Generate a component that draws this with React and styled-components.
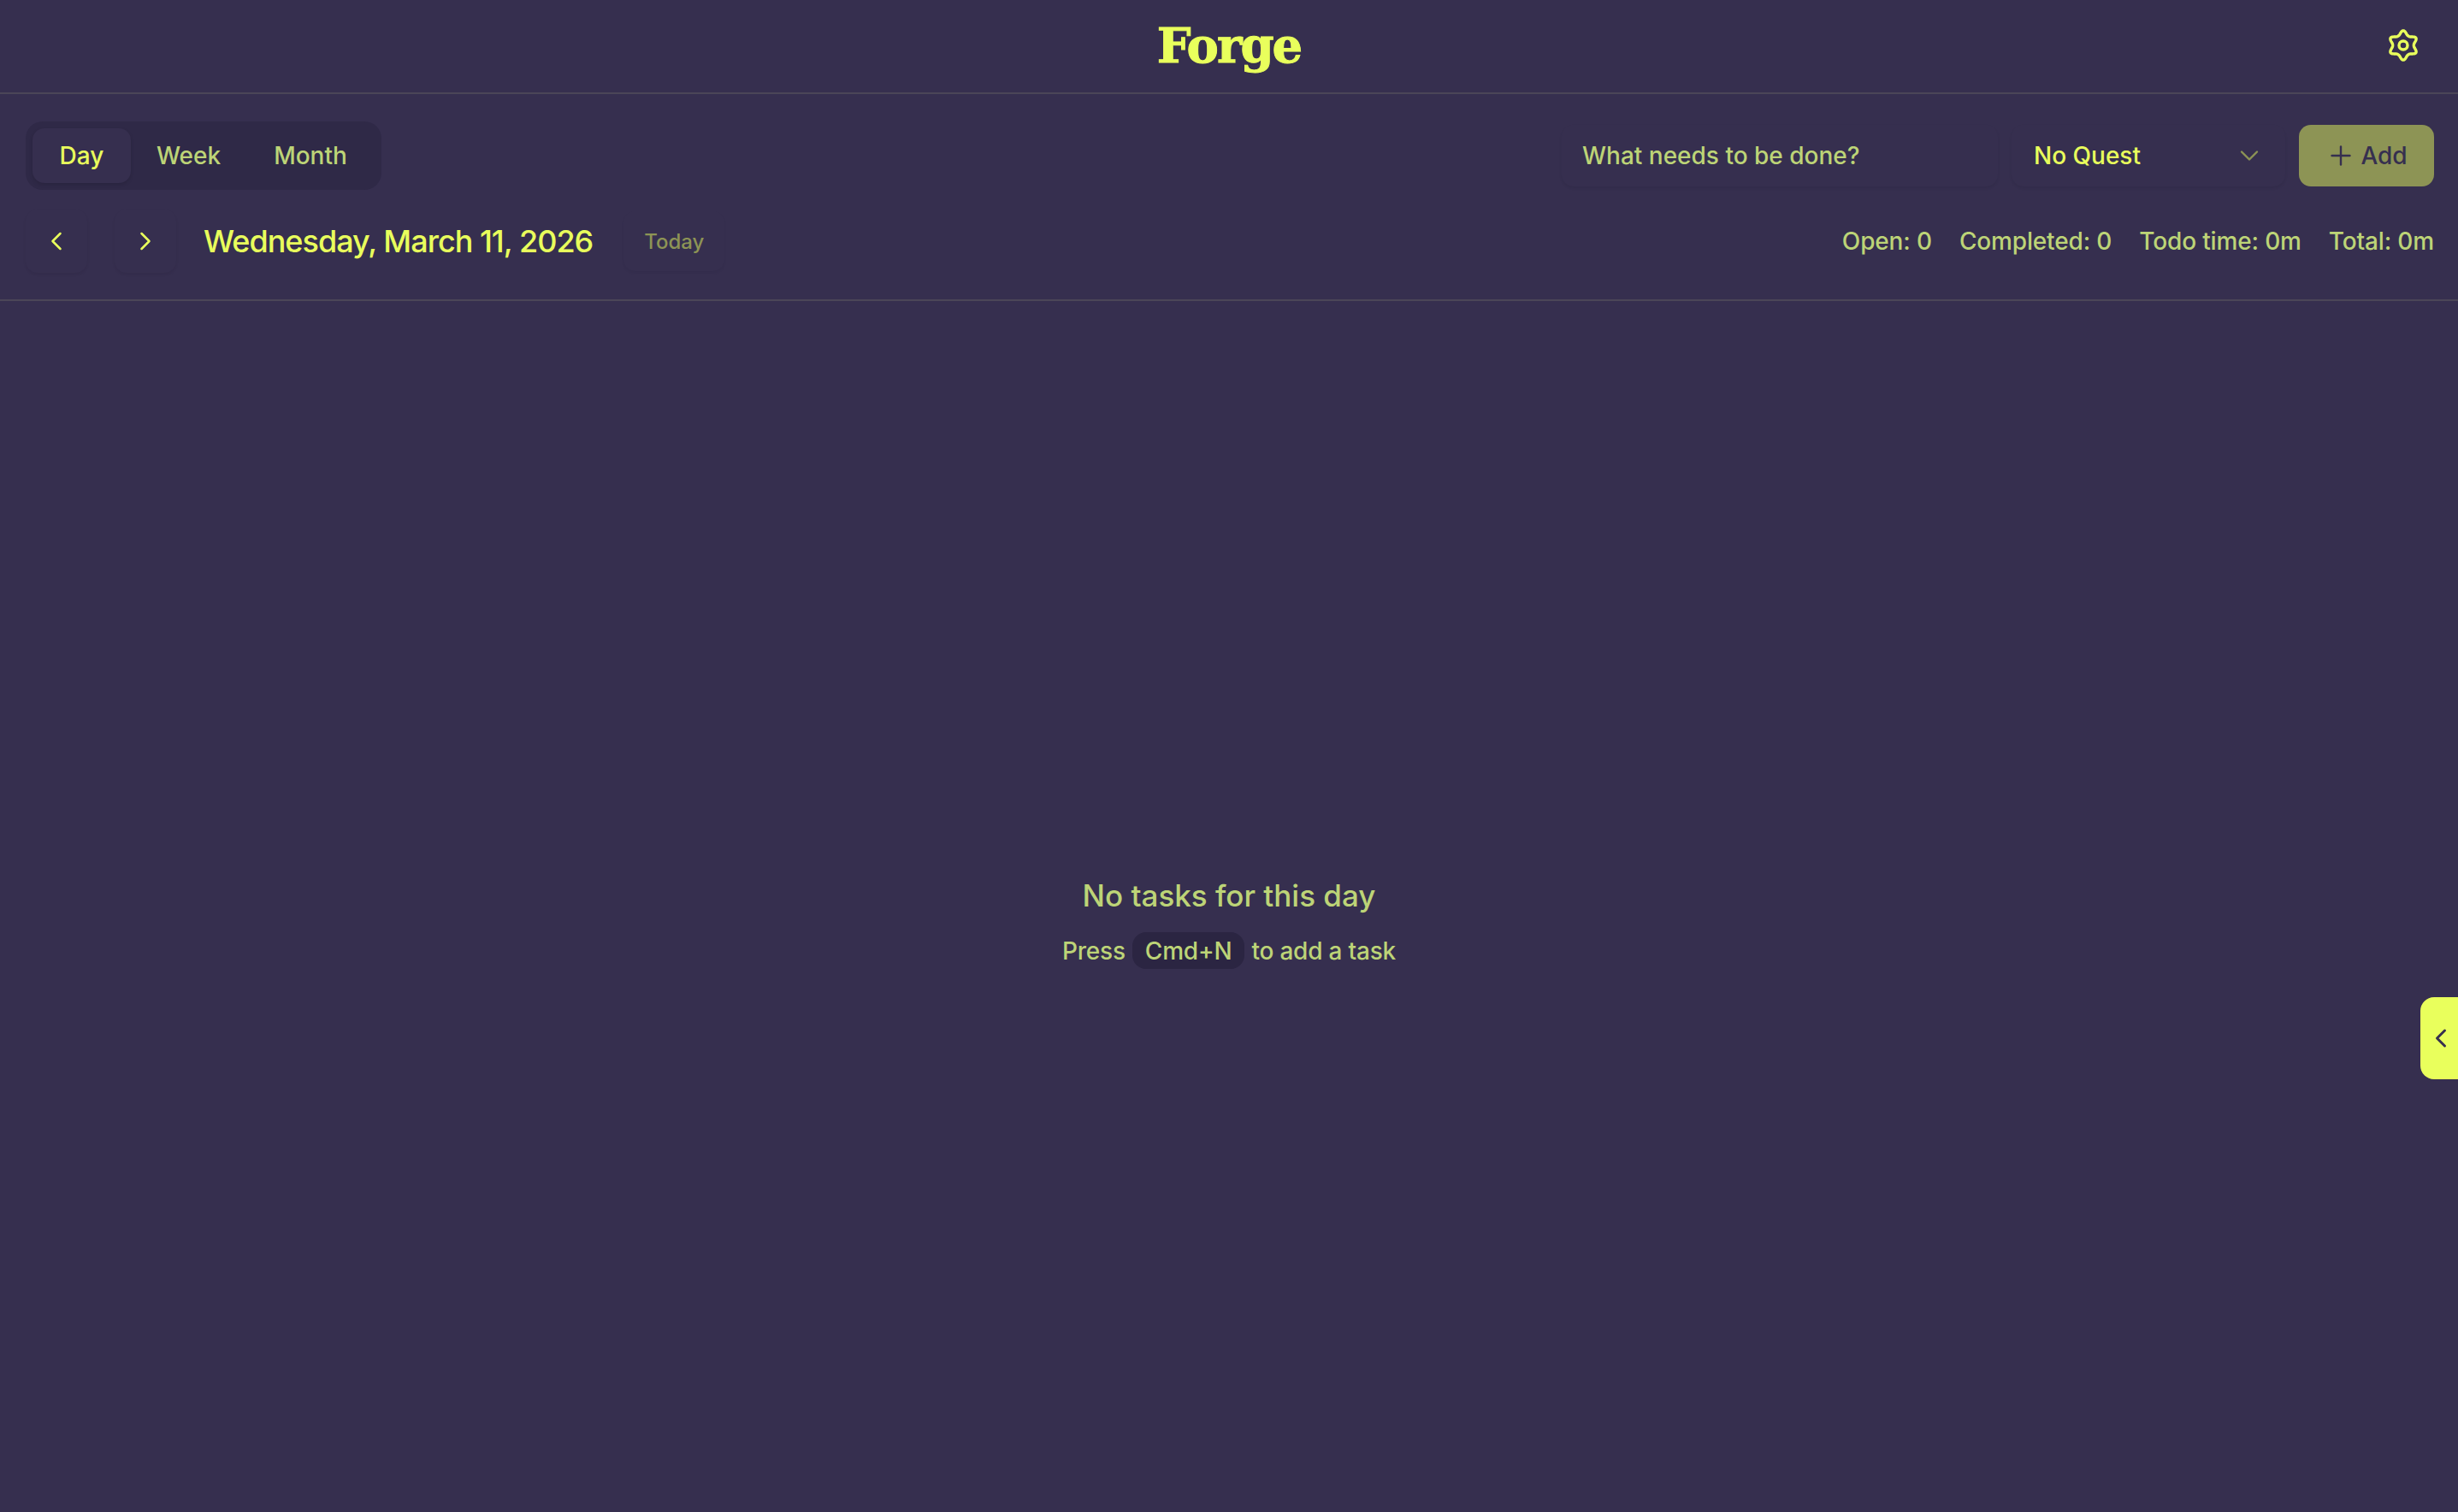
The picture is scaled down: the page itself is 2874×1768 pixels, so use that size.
import React from "react"
import styled, { createGlobalStyle } from "styled-components"
import { ChevronDown, ChevronLeft, ChevronRight, Plus } from "lucide-react"

const GlobalStyle = createGlobalStyle`
  html, body {
    margin: 0;
    padding: 0;
    background: #362f4f;
  }
  * {
    box-sizing: border-box;
  }
`

const Page = styled.div`
  position: relative;
  width: 100%;
  height: 1768px;
  display: flex;
  flex-direction: column;
  background: #362f4f;
  color: #bdd477;
  font-family: "Inter", "Liberation Sans", sans-serif;
  overflow: hidden;
`

const Header = styled.header`
  height: 110px;
  flex: none;
  display: grid;
  grid-template-columns: 1fr auto 1fr;
  align-items: center;
  padding: 0 44px 2px;
  border-bottom: 2px solid #4b4658;
`

const Logo = styled.h1`
  grid-column: 2;
  margin: 0;
  font-family: "DejaVu Serif", "Liberation Serif", serif;
  font-size: 56px;
  font-weight: 700;
  line-height: 1;
  letter-spacing: -2px;
  color: #e9ff5c;
  -webkit-text-stroke: 1px #e9ff5c;
`

const IconButton = styled.button`
  justify-self: end;
  display: flex;
  padding: 0;
  border: 0;
  background: none;
  color: #e9ff5c;
`

const Toolbar = styled.section`
  flex: none;
  height: 242px;
  padding: 32px 28px 0 30px;
  display: flex;
  flex-direction: column;
  border-bottom: 2px solid #4b4658;
`

const Row = styled.div`
  display: flex;
  align-items: center;
  justify-content: space-between;
`

const Group = styled.div`
  display: flex;
  align-items: center;
  gap: ${p => p.$gap || 0}px;
`

const Segments = styled.div`
  display: flex;
  height: 80px;
  padding: 8px;
  border-radius: 20px;
  background: #2f2947;
`

const Segment = styled.button`
  width: ${p => p.$width}px;
  border: 0;
  border-radius: 14px;
  font: 500 28px "Inter", sans-serif;
  color: ${p => (p.$active ? "#e9ff5c" : "#bdd477")};
  background: ${p => (p.$active ? "#362f4f" : "transparent")};
  box-shadow: ${p => (p.$active ? "0 2px 4px rgba(0, 0, 0, 0.12)" : "none")};
`

const Field = styled.div`
  width: ${p => p.$width}px;
  height: 72px;
  display: flex;
  align-items: center;
  justify-content: space-between;
  padding: 0 24px 0 ${p => p.$left}px;
  border-radius: 14px;
  font-size: 28px;
  font-weight: 500;
  color: ${p => p.$color};
  box-shadow: 0 2px 3px rgba(30, 25, 50, 0.14);
`

const Caret = styled(ChevronDown)`
  color: #8d9455;
`

const AddButton = styled.button`
  width: 158px;
  height: 72px;
  display: flex;
  align-items: center;
  justify-content: center;
  gap: 5px;
  border: 0;
  border-radius: 14px;
  background: #8d9455;
  color: #362f4f;
  font: 500 28px "Inter", sans-serif;
`

const DateRow = styled(Row)`
  margin-top: 23px;
`

const NavGroup = styled.div`
  display: flex;
  gap: 32px;
`

const NavButton = styled.button`
  width: 72px;
  height: 74px;
  display: flex;
  align-items: center;
  justify-content: center;
  padding: 0;
  border: 0;
  border-radius: 14px;
  background: transparent;
  color: #e9ff5c;
  box-shadow: 0 2px 3px rgba(30, 25, 50, 0.12);
`

const DateTitle = styled.h2`
  margin: 0 0 0 32px;
  font-size: 36px;
  font-weight: 500;
  letter-spacing: -1px;
  color: #e9ff5c;
`

const TodayButton = styled.button`
  width: 118px;
  height: 70px;
  margin-left: 36px;
  border: 0;
  border-radius: 14px;
  background: transparent;
  color: #8d9455;
  font: 500 24px "Inter", sans-serif;
  box-shadow: 0 2px 3px rgba(30, 25, 50, 0.08);
`

const Stat = styled.span`
  font-size: 28px;
  font-weight: 500;
  letter-spacing: -0.15px;
`

const Empty = styled.main`
  flex: 1;
  display: flex;
  flex-direction: column;
  align-items: center;
  padding-top: 667px;
`

const EmptyTitle = styled.h3`
  margin: 0;
  font-size: 35px;
  font-weight: 500;
  line-height: 56px;
`

const EmptyHint = styled.p`
  display: flex;
  align-items: center;
  gap: 8px;
  margin: 15px 0 0;
  font-size: 28px;
  font-weight: 500;
  letter-spacing: -0.2px;
`

const Key = styled.kbd`
  height: 43px;
  display: flex;
  align-items: center;
  padding: 0 15px;
  border-radius: 16px;
  background: #2b2542;
  font: inherit;
`

const SidebarHandle = styled.button`
  position: absolute;
  top: 1166px;
  right: 0;
  width: 44px;
  height: 96px;
  display: flex;
  align-items: center;
  justify-content: center;
  padding: 0 0 0 4px;
  border: 0;
  border-radius: 16px 0 0 16px;
  background: #e9ff5c;
  color: #362f4f;
`

// six soft lobes, a top lobe pointing up like the reference gear
const gearPath = () => {
  const points = []
  for (let i = 0; i < 144; i++) {
    const angle = (i / 144) * Math.PI * 2
    const r = 14.4 + 2.4 * Math.cos(6 * angle) + 0.35 * Math.cos(12 * angle)
    const x = 20 + r * Math.sin(angle)
    const y = 20 - r * Math.cos(angle)
    points.push(`${x.toFixed(2)} ${y.toFixed(2)}`)
  }
  return `M${points.join("L")}Z`
}

const GearIcon = () => (
  <svg width="40" height="40" viewBox="0 0 40 40" fill="none" stroke="currentColor" strokeWidth="3.4" strokeLinejoin="round">
    <path d={gearPath()} />
    <circle cx="20" cy="20" r="5" />
  </svg>
)

export default function App() {
  return (
    <Page>
      <GlobalStyle />
      <Header>
        <Logo>Forge</Logo>
        <IconButton>
          <GearIcon />
        </IconButton>
      </Header>
      <Toolbar>
        <Row>
          <Segments>
            <Segment $active $width={115}>Day</Segment>
            <Segment $width={135}>Week</Segment>
            <Segment $width={150}>Month</Segment>
          </Segments>
          <Group $gap={16}>
            <Field $width={510} $left={24} $color="#bdd477">What needs to be done?</Field>
            <Field $width={320} $left={26} $color="#e9ff5c">
              No Quest
              <Caret size={36} strokeWidth={1.6} />
            </Field>
            <AddButton>
              <Plus size={36} strokeWidth={1.6} />
              Add
            </AddButton>
          </Group>
        </Row>
        <DateRow>
          <Group>
            <NavGroup>
              <NavButton>
                <ChevronLeft size={36} strokeWidth={1.7} />
              </NavButton>
              <NavButton>
                <ChevronRight size={36} strokeWidth={1.7} />
              </NavButton>
            </NavGroup>
            <DateTitle>Wednesday, March 11, 2026</DateTitle>
            <TodayButton>Today</TodayButton>
          </Group>
          <Group $gap={32}>
            <Stat>Open: 0</Stat>
            <Stat>Completed: 0</Stat>
            <Stat>Todo time: 0m</Stat>
            <Stat>Total: 0m</Stat>
          </Group>
        </DateRow>
      </Toolbar>
      <Empty>
        <EmptyTitle>No tasks for this day</EmptyTitle>
        <EmptyHint>
          Press <Key>Cmd+N</Key> to add a task
        </EmptyHint>
      </Empty>
      <SidebarHandle>
        <ChevronLeft size={36} strokeWidth={2} />
      </SidebarHandle>
    </Page>
  )
}
